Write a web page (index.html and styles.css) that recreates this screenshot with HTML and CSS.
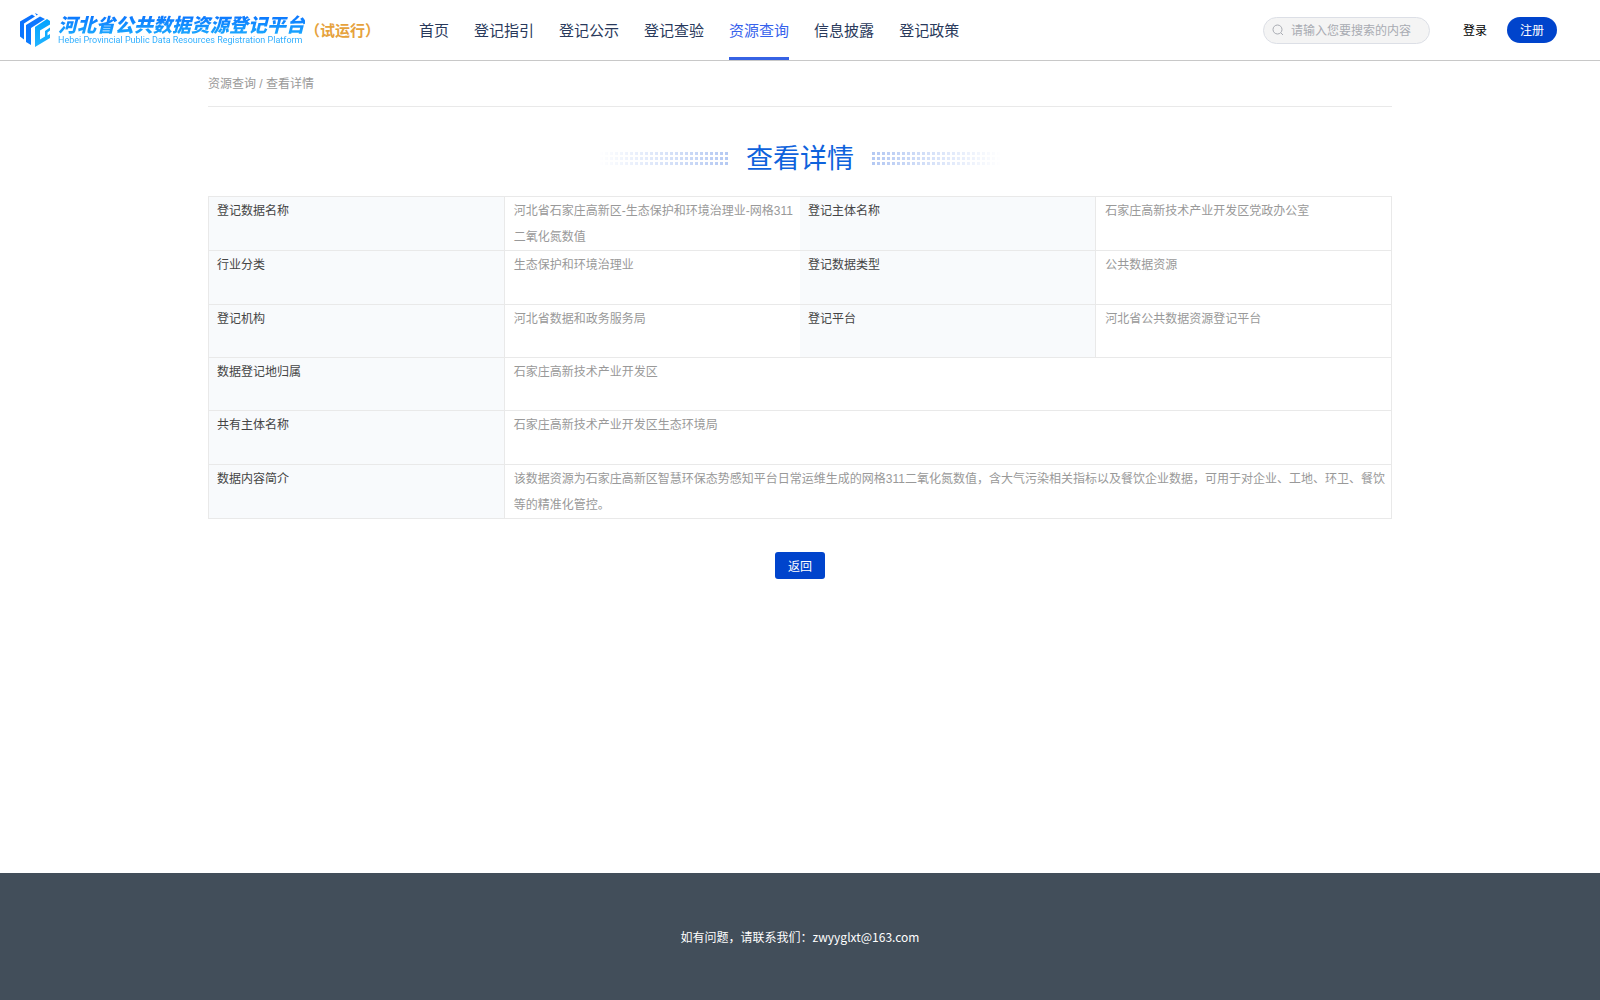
FILE: index.html
```html
<!DOCTYPE html>
<html lang="zh-CN">
<head>
    <meta charset="UTF-8">
    <meta name="viewport" content="width=device-width, initial-scale=1.0">
    <title>河北省公共数据资源登记平台</title>
    <link rel="stylesheet" href="styles.css">
</head>
<body>
    <header class="header">
        <a class="logo" href="#">
            <svg class="logo-icon" width="30" height="34" viewBox="0 0 30 34" aria-hidden="true">
                <defs>
                    <linearGradient id="logoBlue" x1="0" y1="0" x2="1" y2="1">
                        <stop offset="0" stop-color="#0a6cff"/>
                        <stop offset="1" stop-color="#0f86ff"/>
                    </linearGradient>
                    <linearGradient id="logoCyan" x1="0" y1="0" x2="0" y2="1">
                        <stop offset="0" stop-color="#00a2ff"/>
                        <stop offset="1" stop-color="#22b4ff"/>
                    </linearGradient>
                </defs>
                <path fill="url(#logoBlue)" d="M0 8.500 12 1.500l3 2L4 10.500v16l-4-3zM15 0l3 1.500-1.500 1zM6 12l14-8.500 5 2.500-14 9v17l-5-3z"/>
                <path fill="url(#logoCyan)" d="M15 14 27 6l3 2v3.500l-10 6v9l5-3v-5.500l5-3.500v3l-2.500 2v3l2.500-1.500v4l-15 9z"/>
            </svg>
            <span class="logo-text">
                <span class="logo-name">河北省公共数据资源登记平台</span>
                <span class="logo-en">Hebei Provincial Public Data Resources Registration Platform</span>
            </span>
        </a>
        <span class="trial">（试运行）</span>
        <nav class="nav">
            <a href="#">首页</a>
            <a href="#">登记指引</a>
            <a href="#">登记公示</a>
            <a href="#">登记查验</a>
            <a href="#" class="active">资源查询</a>
            <a href="#">信息披露</a>
            <a href="#">登记政策</a>
        </nav>
        <div class="header-right">
            <label class="search">
                <svg width="12" height="12" viewBox="0 0 12 12" fill="none" stroke="#a8abb2" aria-hidden="true">
                    <circle cx="5.5" cy="5.5" r="4.5"/>
                    <path d="m9 9 2 2"/>
                </svg>
                <input type="text" placeholder="请输入您要搜索的内容" aria-label="搜索">
            </label>
            <a class="login" href="#">登录</a>
            <button class="btn register" type="button">注册</button>
        </div>
    </header>

    <main class="container">
        <div class="breadcrumb"><a href="#">资源查询</a> / <span>查看详情</span></div>

        <div class="title">
            <span class="dots dots-left"></span>
            <h1>查看详情</h1>
            <span class="dots dots-right"></span>
        </div>

        <table class="detail">
            <tr>
                <th>登记数据名称</th>
                <td>河北省石家庄高新区-生态保护和环境治理业-网格311二氧化氮数值</td>
                <th>登记主体名称</th>
                <td>石家庄高新技术产业开发区党政办公室</td>
            </tr>
            <tr>
                <th>行业分类</th>
                <td>生态保护和环境治理业</td>
                <th>登记数据类型</th>
                <td>公共数据资源</td>
            </tr>
            <tr class="short">
                <th>登记机构</th>
                <td>河北省数据和政务服务局</td>
                <th>登记平台</th>
                <td>河北省公共数据资源登记平台</td>
            </tr>
            <tr class="short">
                <th>数据登记地归属</th>
                <td colspan="3">石家庄高新技术产业开发区</td>
            </tr>
            <tr>
                <th>共有主体名称</th>
                <td colspan="3">石家庄高新技术产业开发区生态环境局</td>
            </tr>
            <tr>
                <th>数据内容简介</th>
                <td colspan="3">该数据资源为石家庄高新区智慧环保态势感知平台日常运维生成的网格311二氧化氮数值，含大气污染相关指标以及餐饮企业数据，可用于对企业、工地、环卫、餐饮等的精准化管控。</td>
            </tr>
        </table>

        <div class="actions">
            <button class="btn back" type="button">返回</button>
        </div>
    </main>

    <footer class="footer">如有问题，请联系我们：zwyyglxt@163.com</footer>
</body>
</html>
```
FILE: styles.css
```css
* {
    box-sizing: border-box;
}

body {
    margin: 0;
    min-height: 100vh;
    display: flex;
    flex-direction: column;
    font-family: "Liberation Sans", "Noto Sans CJK SC", sans-serif;
    font-size: 12px;
    color: #333;
    background: #fff;
}

a {
    color: inherit;
    text-decoration: none;
}

.header {
    display: flex;
    align-items: center;
    height: 61px;
    padding: 0 43px 0 20px;
    border-bottom: 1px solid #c8c8c8;
    font-family: "Noto Sans CJK SC", sans-serif;
}

.logo {
    display: flex;
    align-items: center;
    gap: 8px;
}

.logo-text {
    display: flex;
    flex-direction: column;
    white-space: nowrap;
}

.logo-name,
.logo-en {
    color: transparent;
    background: linear-gradient(#0a72ff, #1aa6ff);
    background-clip: text;
    -webkit-background-clip: text;
}

.logo-name {
    font-size: 19px;
    font-weight: 900;
    font-style: italic;
    line-height: 20px;
}

.logo-en {
    font-family: Roboto, sans-serif;
    font-size: 9px;
    line-height: 12px;
    background-image: linear-gradient(#1aa0ff, #33b5ff);
}

.trial {
    padding-bottom: 2px;
    font-size: 15px;
    font-weight: bold;
    color: #e6a23c;
    white-space: nowrap;
}

.nav {
    display: flex;
    gap: 25px;
    height: 60px;
    margin-left: 39px;
    font-size: 15px;
    line-height: 60px;
    color: #29395b;
    white-space: nowrap;
}

.nav .active {
    color: #3662ec;
    box-shadow: inset 0 -3px #3662e4;
}

.header-right {
    display: flex;
    align-items: center;
    margin-left: auto;
}

.search {
    display: flex;
    align-items: center;
    gap: 7px;
    width: 167px;
    height: 27px;
    padding: 0 8px;
    border: 1px solid #dcdfe6;
    border-radius: 14px;
    background: #f4f4f4;
}

.search svg {
    flex: none;
}

.search input {
    flex: 1;
    min-width: 0;
    padding: 2px 0 0;
    border: 0;
    outline: 0;
    background: none;
    font: 12px "Liberation Sans", "Noto Sans CJK SC", sans-serif;
}

.search input::placeholder {
    color: #a8abb2;
}

.login {
    margin: 0 20px 0 33px;
    padding-bottom: 2px;
    color: #000;
}

.btn {
    width: 50px;
    height: 27px;
    padding: 0 0 1px;
    border: 0;
    border-radius: 3px;
    background: #0044cc;
    color: #fff;
    font: 12px "Liberation Sans", "Noto Sans CJK SC", sans-serif;
    cursor: pointer;
}

.register {
    height: 26px;
    padding-bottom: 2px;
    border-radius: 13px;
}

.container {
    width: 74%;
    margin: 0 auto;
    flex: 1;
}

.breadcrumb {
    height: 46px;
    border-bottom: 1px solid #e9e9e9;
    line-height: 46px;
    color: #999;
}

.title {
    display: flex;
    justify-content: center;
    align-items: center;
    gap: 17px;
    height: 89px;
    padding-top: 14px;
}

.title h1 {
    margin: 0;
    font-size: 27px;
    font-weight: normal;
    line-height: 40px;
    color: #0e62dc;
}

.dots {
    width: 130px;
    height: 15px;
    background: radial-gradient(circle, #b3c8f3 2px, transparent 2px) 0 0 / 5px 5px;
}

.dots-left {
    mask-image: linear-gradient(to left, #000, transparent);
}

.dots-right {
    mask-image: linear-gradient(to right, #000, transparent);
}

.detail {
    width: 100%;
    table-layout: fixed;
    border-collapse: collapse;
    border: 1px solid #e9e9e9;
    line-height: 26px;
}

.detail tr {
    height: 54px;
    border-bottom: 1px solid #e9e9e9;
}

.detail .short {
    height: 53px;
}

.detail th,
.detail td {
    padding: 1px 4px 0 8px;
    text-align: left;
    vertical-align: top;
}

.detail th {
    border-right: 1px solid #e9e9e9;
    background: #f8fafc;
    font-weight: normal;
    color: #444;
}

.detail td {
    padding-left: 9px;
    color: #999;
}

.actions {
    display: flex;
    justify-content: center;
    padding: 33px 0;
}

.footer {
    padding: 54px 20px 53px;
    background: #424e5a;
    color: #fff;
    font-family: "Noto Sans CJK SC", sans-serif;
    line-height: 20px;
    text-align: center;
}
```
